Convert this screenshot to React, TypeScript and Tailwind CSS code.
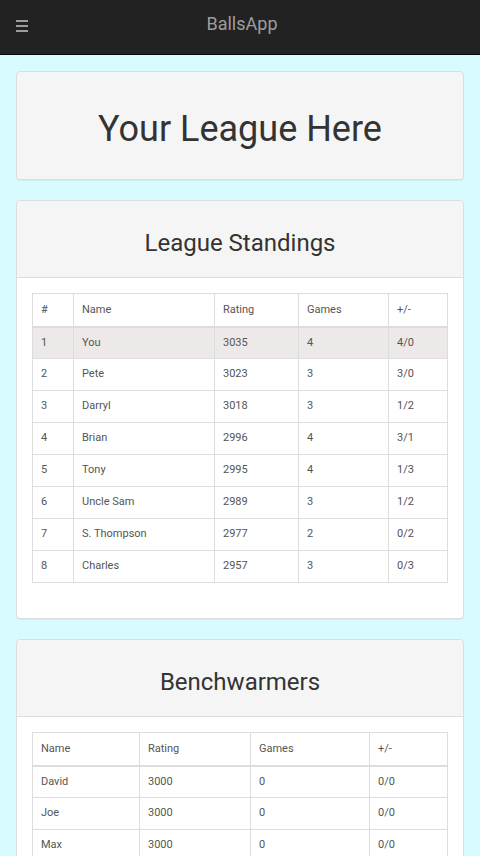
import React from 'react';

const standings = [
  { n: 1, name: 'You', rating: 3035, games: 4, pm: '4/0' },
  { n: 2, name: 'Pete', rating: 3023, games: 3, pm: '3/0' },
  { n: 3, name: 'Darryl', rating: 3018, games: 3, pm: '1/2' },
  { n: 4, name: 'Brian', rating: 2996, games: 4, pm: '3/1' },
  { n: 5, name: 'Tony', rating: 2995, games: 4, pm: '1/3' },
  { n: 6, name: 'Uncle Sam', rating: 2989, games: 3, pm: '1/2' },
  { n: 7, name: 'S. Thompson', rating: 2977, games: 2, pm: '0/2' },
  { n: 8, name: 'Charles', rating: 2957, games: 3, pm: '0/3' },
];

const bench = [
  { name: 'David', rating: 3000, games: 0, pm: '0/0' },
  { name: 'Joe', rating: 3000, games: 0, pm: '0/0' },
  { name: 'Max', rating: 3000, games: 0, pm: '0/0' },
];

const th = 'border border-[#ddd] border-b-2 px-2 h-[33px] text-left font-normal align-middle';
const td = 'border border-[#ddd] px-2 h-[32px] align-middle';

export default function App() {
  return (
    <div className="min-h-screen bg-[#d7fbff] text-[#333]" style={{ fontFamily: 'Roboto, "Liberation Sans", sans-serif' }}>
      {/* Navbar */}
      <header className="h-[55px] bg-[#222] border-b border-[#080808] relative flex items-center justify-center">
        <button className="absolute left-[16px] top-[20px] flex flex-col gap-[3px]">
          <span className="block w-[12px] h-[2px] bg-[#9d9d9d]" />
          <span className="block w-[12px] h-[2px] bg-[#9d9d9d]" />
          <span className="block w-[12px] h-[2px] bg-[#9d9d9d]" />
        </button>
        <span className="text-[18px] text-[#9d9d9d] ml-[4px] -mt-[8px]">BallsApp</span>
      </header>

      <main className="px-4 pt-4 flex flex-col gap-5">
        {/* League title */}
        <section className="h-[109px] bg-[#f5f5f5] border border-[#ddd] rounded shadow-[0_1px_1px_rgba(0,0,0,0.05)] flex items-center justify-center">
          <h1 className="text-[36px] leading-none mt-[6px]">Your League Here</h1>
        </section>

        {/* Standings */}
        <section className="bg-white border border-[#ddd] rounded shadow-[0_1px_1px_rgba(0,0,0,0.05)]">
          <div className="h-[77px] bg-[#f5f5f5] border-b border-[#ddd] rounded-t flex items-center justify-center">
            <h2 className="text-[24px] leading-none mt-[8px]">League Standings</h2>
          </div>
          <div className="p-[15px] pb-[35px]">
            <table className="w-full border-collapse text-[11px] text-[#555]">
              <thead>
                <tr>
                  <th className={`${th} w-[41px]`}>#</th>
                  <th className={`${th} w-[141px]`}>Name</th>
                  <th className={`${th} w-[84px]`}>Rating</th>
                  <th className={`${th} w-[90px]`}>Games</th>
                  <th className={th}>+/-</th>
                </tr>
              </thead>
              <tbody>
                {standings.map((r) => (
                  <tr key={r.n} className={r.n === 1 ? 'bg-[#eee9e9]' : ''}>
                    <td className={td}>{r.n}</td>
                    <td className={td}>{r.name}</td>
                    <td className={td}>{r.rating}</td>
                    <td className={td}>{r.games}</td>
                    <td className={td}>{r.pm}</td>
                  </tr>
                ))}
              </tbody>
            </table>
          </div>
        </section>

        {/* Benchwarmers */}
        <section className="bg-white border border-[#ddd] rounded shadow-[0_1px_1px_rgba(0,0,0,0.05)]">
          <div className="h-[77px] bg-[#f5f5f5] border-b border-[#ddd] rounded-t flex items-center justify-center">
            <h2 className="text-[24px] leading-none mt-[8px]">Benchwarmers</h2>
          </div>
          <div className="p-[15px] pb-[35px]">
            <table className="w-full border-collapse text-[11px] text-[#555]">
              <thead>
                <tr>
                  <th className={`${th} w-[107px]`}>Name</th>
                  <th className={`${th} w-[111px]`}>Rating</th>
                  <th className={`${th} w-[119px]`}>Games</th>
                  <th className={th}>+/-</th>
                </tr>
              </thead>
              <tbody>
                {bench.map((r) => (
                  <tr key={r.name}>
                    <td className={td}>{r.name}</td>
                    <td className={td}>{r.rating}</td>
                    <td className={td}>{r.games}</td>
                    <td className={td}>{r.pm}</td>
                  </tr>
                ))}
              </tbody>
            </table>
          </div>
        </section>
      </main>
    </div>
  );
}
